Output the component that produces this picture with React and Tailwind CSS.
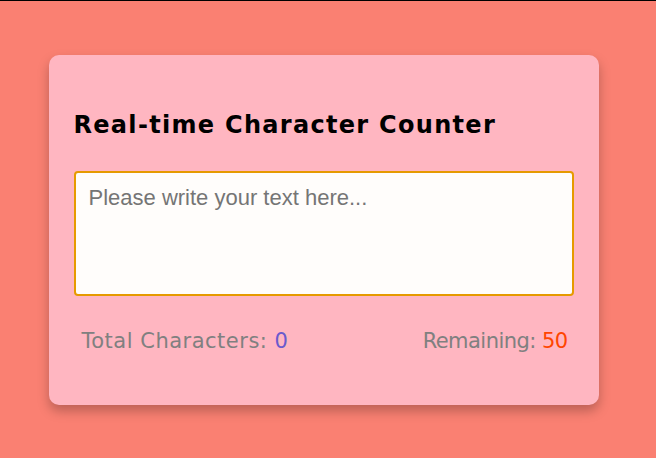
import React, { useState } from "react";

export default function App() {
  const [text, setText] = useState("");
  const max = 50;
  return (
    <div className="w-[656px] h-[458px] flex flex-col bg-[#fa8072] overflow-hidden">
      <div className="h-px bg-black shrink-0" />
      <div className="flex-1 flex items-center justify-center pr-[9px]">
        <div
          className="w-[550px] h-[350px] bg-[#ffb6c1] rounded-[10px] shadow-[0_6px_12px_rgba(0,0,0,0.25)] px-[25px] pt-[55px] flex flex-col"
          style={{ fontFamily: '"Comic Sans MS", "DejaVu Sans", sans-serif' }}
        >
          <h2 className="text-[24px] font-bold text-black leading-[30px] tracking-[1.3px] m-0">
            Real-time Character Counter
          </h2>
          <textarea
            autoFocus
            value={text}
            maxLength={max}
            onChange={(e) => setText(e.target.value)}
            placeholder="Please write your text here..."
            className="mt-[31px] w-[500px] h-[125px] resize-none bg-[#fffdfb] border-2 border-[#e69a00] rounded-[4px] px-[13px] py-[12px] text-[22px] leading-[26px] text-black placeholder:text-[#757575] outline-none caret-black"
            style={{ fontFamily: '"Liberation Sans", Arial, sans-serif' }}
          />
          <div className="mt-[31px] flex justify-between pl-[8px] pr-[6px] text-[21px] leading-[28px] text-[#808080]">
            <span className="tracking-[0.5px]">
              Total Characters: <span className="text-[#6a5acd]">{text.length}</span>
            </span>
            <span className="tracking-[-0.55px]">
              Remaining: <span className="text-[#ff4500]">{max - text.length}</span>
            </span>
          </div>
        </div>
      </div>
    </div>
  );
}
